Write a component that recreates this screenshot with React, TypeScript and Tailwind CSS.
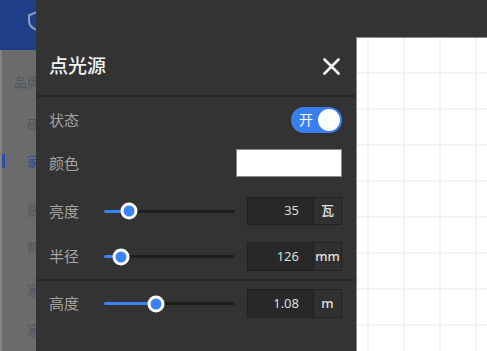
import type { ReactNode } from "react";

const FONT = "font-['Noto_Sans','Noto_Sans_CJK_SC',sans-serif]";

type SliderRowProps = {
  label: string;
  value: string;
  unit: string;
  percent: number;
  height: string;
};

export default function App() {
  return (
    <div className={`flex h-[351px] w-[487px] overflow-hidden bg-[#333333] ${FONT}`}>
      <Sidebar />
      <LightPanel />
      <div className="flex min-w-0 flex-1 flex-col">
        <div className="h-[37px] shrink-0 bg-[#333333]" />
        <Canvas />
      </div>
    </div>
  );
}

function Sidebar() {
  return (
    <aside className="flex w-[36px] shrink-0 flex-col overflow-hidden">
      <div className="flex h-[50px] shrink-0 bg-[#203e88] pl-[27px] pt-[11px]">
        <svg className="shrink-0" width="18" height="20" viewBox="0 0 18 20" fill="none">
          <path
            d="M9 1.5 2 4.2v5.3c0 4.2 3 7.6 7 9 4-1.4 7-4.8 7-9V4.2L9 1.5Z"
            stroke="#8d9cc4"
            strokeWidth="2"
            strokeLinejoin="round"
          />
        </svg>
      </div>
      <div className="flex flex-1 flex-col overflow-hidden border-l-2 border-[#828282] bg-[#6b6b6b] text-[13px] leading-[20px] whitespace-nowrap text-[#4f5566]">
        <div className="mt-[22px] pl-[12px]">品牌</div>
        <div className="mt-[22px] pl-[25px]">硬</div>
        <div className="mt-[17px] flex items-center">
          <div className="h-[14px] w-[3px] shrink-0 bg-[#2c4fa8]" />
          <span className="ml-[22px] text-[#2a4a9c]">家</span>
        </div>
        <div className="mt-[29px] pl-[25px]">厨</div>
        <div className="mt-[17px] pl-[25px]">照</div>
        <div className="mt-[23px] pl-[25px]">家</div>
        <div className="mt-[20px] pl-[25px]">家</div>
      </div>
    </aside>
  );
}

function LightPanel() {
  return (
    <section className="flex w-[320px] shrink-0 flex-col bg-[#333333]">
      <div className="h-[37px] shrink-0" />
      <header className="flex h-[58px] shrink-0 items-center justify-between pl-[13px] pr-[16px]">
        <h2 className="text-[19px] leading-none font-medium text-[#f2f2f2]">点光源</h2>
        <button type="button" aria-label="关闭" className="flex h-[18px] w-[18px] items-center justify-center">
          <svg width="17" height="17" viewBox="0 0 17 17" fill="none">
            <path d="M1.5 1.5 15.5 15.5M15.5 1.5 1.5 15.5" stroke="#f5f5f5" strokeWidth="2.6" strokeLinecap="round" />
          </svg>
        </button>
      </header>
      <div className="h-[2px] shrink-0 bg-[#262626]" />

      <div className="flex flex-col px-[13px] pr-[14px] pt-[10px] pb-[8px]">
        <Row height="h-[26px]" label="状态">
          <div className="ml-auto flex h-[26px] w-[51px] items-center justify-between rounded-full bg-[#3a7ff0] pl-[8px] pr-[2px]">
            <span className="text-[14px] leading-none text-white">开</span>
            <span className="h-[22px] w-[22px] rounded-full bg-white" />
          </div>
        </Row>
        <div className="mt-[16px]">
          <Row height="h-[28px]" label="颜色">
            <div className="ml-auto h-[28px] w-[106px] border border-[#8a8a8a] bg-white" />
          </Row>
        </div>
        <div className="mt-[20px]">
          <SliderRow height="h-[28px]" label="亮度" value="35" unit="瓦" percent={19} />
        </div>
        <div className="mt-[17px]">
          <SliderRow height="h-[29px]" label="半径" value="126" unit="mm" percent={13} />
        </div>
      </div>

      <div className="h-[2px] shrink-0 bg-[#282828]" />

      <div className="flex flex-col px-[13px] pr-[14px] pt-[8px]">
        <SliderRow height="h-[29px]" label="高度" value="1.08" unit="m" percent={40} />
      </div>
    </section>
  );
}

function Row({ label, height, children }: { label: string; height: string; children: ReactNode }) {
  return (
    <div className={`flex items-center ${height}`}>
      <span className="text-[15px] leading-none text-[#a3a3a3]">{label}</span>
      {children}
    </div>
  );
}

function SliderRow({ label, value, unit, percent, height }: SliderRowProps) {
  return (
    <div className={`flex items-center ${height}`}>
      <span className="w-[55px] shrink-0 text-[15px] leading-none text-[#a3a3a3]">{label}</span>
      <div className="relative h-[3px] w-[131px] shrink-0 rounded-full bg-[#1e1e1e]">
        <div className="absolute top-0 left-0 h-[3px] rounded-full bg-[#3b82f6]" style={{ width: `${percent}%` }} />
        <div
          className="absolute top-1/2 flex h-[17px] w-[17px] -translate-x-1/2 -translate-y-1/2 items-center justify-center rounded-full bg-white"
          style={{ left: `${percent}%` }}
        >
          <div className="h-[11px] w-[11px] rounded-full bg-[#3b82f6]" />
        </div>
      </div>
      <div className={`ml-[12px] flex w-[95px] shrink-0 border border-[#212121] ${height}`}>
        <div className="flex w-[65px] items-center justify-end bg-[#282828] pr-[14px] text-[13px] text-[#dedede]">
          {value}
        </div>
        <div className="flex flex-1 items-center justify-center border-l border-[#212121] bg-[#303030] text-[13px] font-medium text-[#e0e0e0]">
          {unit}
        </div>
      </div>
    </div>
  );
}

function Canvas() {
  const cols = [11, 47, 83, 119];
  const rows = [35, 71, 107, 143, 179, 215, 251, 287];
  return (
    <div className="relative flex-1 overflow-hidden border-t border-l border-[#8c8c8c] bg-white">
      <svg width="130" height="314" className="block">
        {cols.map((x) => (
          <line key={`c${x}`} x1={x} y1={0} x2={x} y2={314} stroke="#f0f0f0" strokeWidth="1.5" />
        ))}
        {rows.map((y) => (
          <line key={`r${y}`} x1={0} y1={y} x2={130} y2={y} stroke="#f0f0f0" strokeWidth="1.5" />
        ))}
      </svg>
    </div>
  );
}
